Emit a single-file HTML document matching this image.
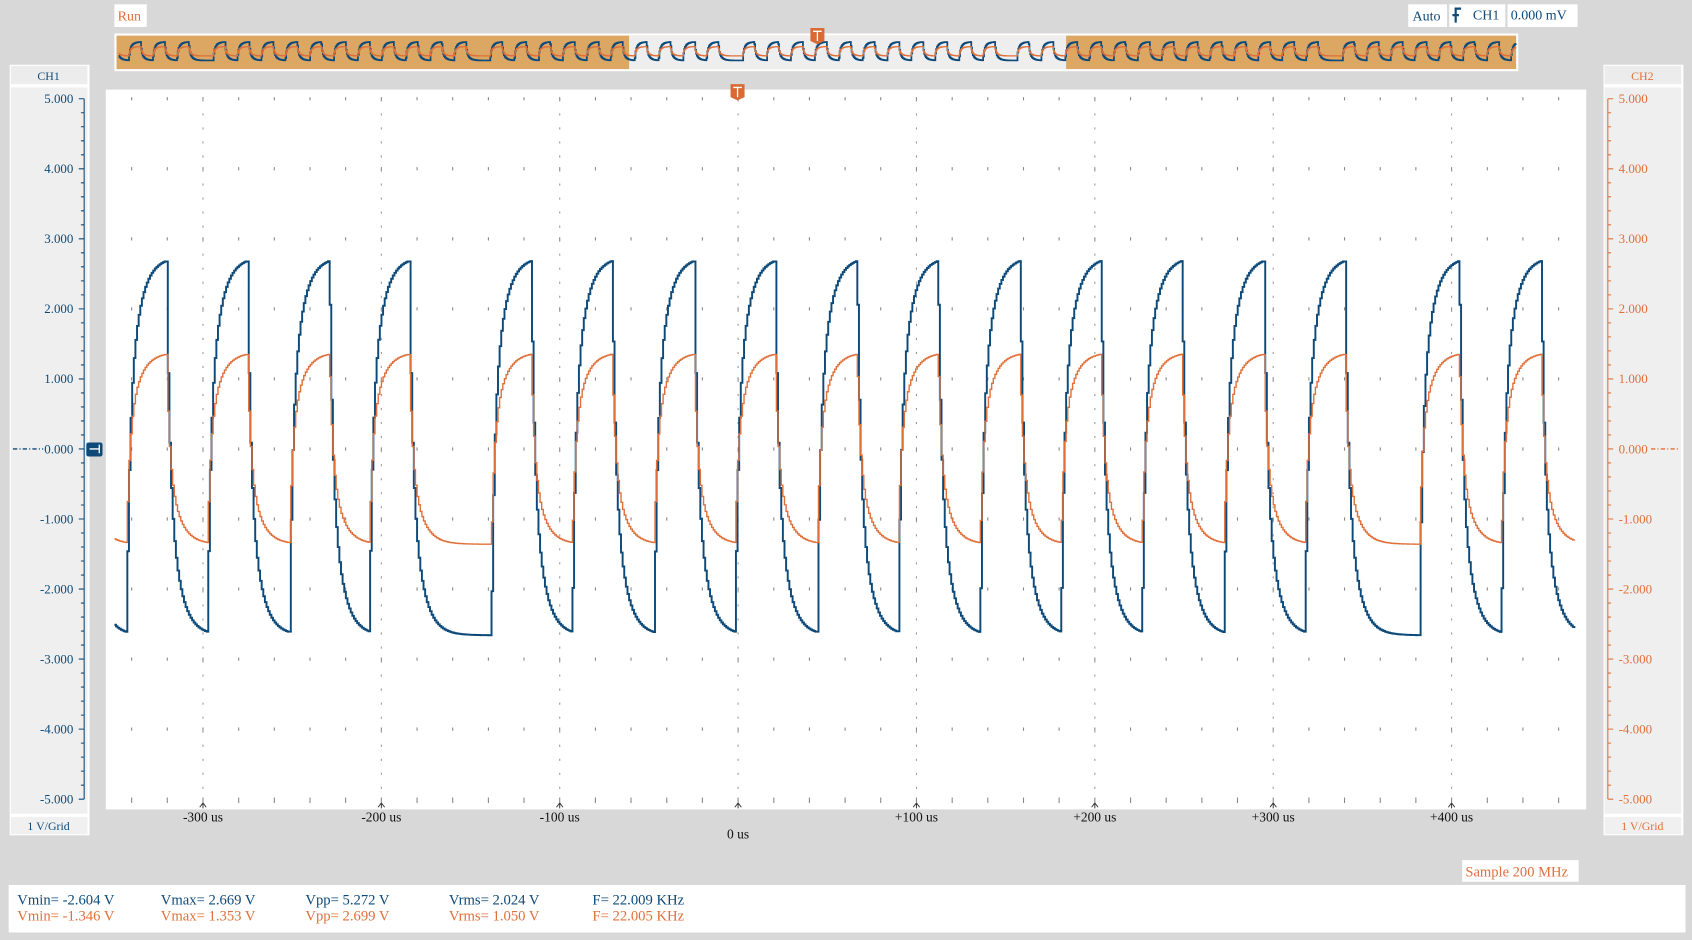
<!DOCTYPE html>
<html><head><meta charset="utf-8"><style>
html,body{margin:0;padding:0;background:#d8d8d8;width:1692px;height:940px;overflow:hidden}
svg{display:block}
text{font-family:"Liberation Serif",serif}
</style></head><body>
<svg id="s" width="1692" height="940" viewBox="0 0 1568 871" preserveAspectRatio="none" xmlns="http://www.w3.org/2000/svg">
<rect x="0" y="0" width="1568" height="871" fill="#d8d8d8"/>
<rect x="106" y="4" width="30" height="21" fill="#fff"/>
<text x="109" y="19" font-size="13" fill="#e0703a">Run</text>
<rect x="106" y="31" width="1301" height="35" fill="#fff"/>
<rect x="108" y="33" width="1297" height="31" fill="#dca663"/>
<rect x="583" y="33" width="405" height="31" fill="#eeeeee"/>
<g id="ov"></g>
<path d="M751 26h13v12l-6.5 3l-6.5-3z" fill="#d96a35"/>
<path d="M753.5 29h8M757.5 29v9" stroke="#fff" stroke-width="1.2"/>
<rect x="1305" y="4" width="36" height="21" fill="#fff"/>
<text x="1309" y="19" font-size="13" fill="#0d4a7a">Auto</text>
<rect x="1343" y="4" width="52" height="21" fill="#fff"/>
<path d="M1349 21v-13h5M1346 14h6" stroke="#0d4a7a" stroke-width="2" fill="none"/>
<text x="1365" y="18" font-size="13" fill="#0d4a7a">CH1</text>
<rect x="1397" y="4" width="65" height="21" fill="#fff"/>
<text x="1400" y="18" font-size="13" fill="#0d4a7a">0.000 mV</text>
<rect x="98" y="83" width="1372" height="667" fill="#fff"/>
<g id="grid"></g>
<path d="M677 78h13v12l-6.5 3l-6.5-3z" fill="#d96a35"/>
<path d="M679.5 81h8M683.5 81v9" stroke="#fff" stroke-width="1.2"/>
<rect x="9" y="60" width="74" height="714" fill="#fff"/>
<rect x="10" y="61" width="71" height="17" fill="#ececec"/>
<text x="45" y="74" font-size="11" fill="#0d4a7a" text-anchor="middle">CH1</text>
<rect x="10" y="81" width="71" height="673" fill="#efefef"/>
<rect x="10" y="757" width="71" height="16" fill="#f0f0f0"/>
<text x="45" y="769" font-size="11" fill="#0d4a7a" text-anchor="middle">1 V/Grid</text>
<rect x="1486" y="60" width="74" height="714" fill="#fff"/>
<rect x="1487" y="61" width="71" height="17" fill="#ececec"/>
<text x="1522" y="74" font-size="11" fill="#e0703a" text-anchor="middle">CH2</text>
<rect x="1487" y="81" width="71" height="673" fill="#efefef"/>
<rect x="1487" y="757" width="71" height="16" fill="#f0f0f0"/>
<text x="1522" y="769" font-size="11" fill="#e0703a" text-anchor="middle">1 V/Grid</text>
<g id="axes"></g>
<path d="M12 416h28" stroke="#0d4a7a" stroke-width="1.2" stroke-dasharray="4 2 1 2"/>
<path d="M1530 416h26" stroke="#e0703a" stroke-width="1.2" stroke-dasharray="4 2 1 2"/>
<rect x="80" y="410" width="15" height="13" rx="2" fill="#0d4a7a"/>
<path d="M83 416h9M92 412v8" stroke="#fff" stroke-width="1.2"/>
<g id="waves"></g>
<g font-size="12.5" fill="#111" text-anchor="middle" id="tl"></g>
<text x="684" y="777" font-size="12.5" fill="#111" text-anchor="middle">0 us</text>
<rect x="1355" y="797" width="108" height="20" fill="#fff"/>
<text x="1358" y="812" font-size="13.5" fill="#e0703a">Sample 200 MHz</text>
<rect x="8" y="820" width="1554" height="44" fill="#fff"/>
<g font-size="13.6" fill="#0d4a7a">
<text x="16" y="838">Vmin= -2.604 V</text><text x="149" y="838">Vmax= 2.669 V</text><text x="283" y="838">Vpp= 5.272 V</text><text x="416" y="838">Vrms= 2.024 V</text><text x="549" y="838">F= 22.009 KHz</text></g>
<g font-size="13.6" fill="#e0703a">
<text x="16" y="853">Vmin= -1.346 V</text><text x="149" y="853">Vmax= 1.353 V</text><text x="283" y="853">Vpp= 2.699 V</text><text x="416" y="853">Vrms= 1.050 V</text><text x="549" y="853">F= 22.005 KHz</text></g>
</svg>
<script>
var NS="http://www.w3.org/2000/svg";
function el(p,t,a){var e=document.createElementNS(NS,t);for(var k in a)e.setAttribute(k,a[k]);p.appendChild(e);return e;}
var g=document.getElementById('grid'),ax=document.getElementById('axes'),tl=document.getElementById('tl');
function Y(v){return 416-v*64.9;}
var d="";
for(var k=-18;k<=24;k++){var x=684+k*33.06;if(x<104||x>1466)continue;
 for(var v=-5;v<=5;v++){var y=Y(v);d+="M"+x.toFixed(1)+" "+(y-1.5)+"v3";}
 d+="M"+x.toFixed(1)+" 741v3";}
var d2="";
[-300,-200,-100,0,100,200,300,400].forEach(function(t){var x=684+t*1.653;
 for(var y=92;y<740;y+=13){d2+="M"+x.toFixed(1)+" "+y+"v2";}
 el(g,'path',{d:"M"+(x-3)+" 748l3-4l3 4M"+x+" 744v5",stroke:"#333","stroke-width":"0.9",fill:"none"});
 if(t!=0){var tx=el(tl,'text',{x:x,y:761});tx.textContent=(t>0?"+":"")+t+" us";}
});
el(g,'path',{d:d,stroke:"#888","stroke-width":"1"});
el(g,'path',{d:d2,stroke:"#999","stroke-width":"1"});
var a1="M78 91.5V740.5",a2="M1490 91.5V740.5";
for(var i=-25;i<=25;i++){var y=Y(i/5);var L=(i%5==0)?5:3;a1+="M"+(78-L)+" "+y+"h"+L;a2+="M1490 "+y+"h"+L;}
el(ax,'path',{d:a1,stroke:"#0d4a7a","stroke-width":"1",fill:"none"});
el(ax,'path',{d:a2,stroke:"#e0703a","stroke-width":"1",fill:"none"});
for(var v=-5;v<=5;v++){var s=v.toFixed(3);if(v==0)s="0.000";
 var t=el(ax,'text',{x:68,y:Y(v)+4,"font-size":"12",fill:"#0d4a7a","text-anchor":"end"});t.textContent=s;
 var t2=el(ax,'text',{x:1500,y:Y(v)+4,"font-size":"12",fill:"#e0703a"});t2.textContent=s;}
var rises=[117,192,268,342,455,530,606,681,757,832,908,983,1058,1134,1209,1315,1391];
var r=117,back=[];
while(r>-1560){r-=75.5;if(Math.abs(r+420)<40||Math.abs(r+1300)<40)r-=38;back.unshift(r);}
var fwd=[];r=1391;while(r<2950){r+=75.5;if(Math.abs(r-2300)<40)r+=38;fwd.push(r);}
var all=back.concat(rises).concat(fwd);
var edges=[];all.forEach(function(rr){edges.push([rr,1]);edges.push([rr+37,0]);});
function sim(x0,x1,step,H,Lw){var out=[],cur=Lw,ei=0,st=Lw,te=-1e9,tg=Lw;
 while(ei<edges.length&&edges[ei][0]<x0){ei++;}
 if(ei>0){te=edges[ei-1][0];tg=edges[ei-1][1]?H:Lw;st=tg==H?Lw:H;}
 for(var x=x0;x<=x1;x+=step){
  while(ei<edges.length&&edges[ei][0]<=x){st=cur;te=edges[ei][0];tg=edges[ei][1]?H:Lw;ei++;}
  var t=x-te;var f=1-0.5*Math.exp(-t/2.5)-0.5*Math.exp(-t/9.5);
  cur=st+(tg-st)*f;out.push([x,cur]);}
 return out;}
function wave(x0,x1,step,H,Lw,map){var p="",pts=sim(x0,x1,step,H,Lw);
 pts.forEach(function(q,i){var m=map(q[0],q[1]);if(i==0)p="M"+m[0].toFixed(1)+" "+m[1].toFixed(1);else p+="H"+m[0].toFixed(1)+"V"+m[1].toFixed(1);});
 return p;}
var w=document.getElementById('waves');
var mmap=function(x,v){return[x,Y(v)];};
el(w,'path',{d:wave(106,1460,1.5,2.74,-2.66,mmap),stroke:"#0d4a7a","stroke-width":"1.8",fill:"none"});
el(w,'path',{d:wave(106,1460,1.5,1.38,-1.36,mmap),stroke:"#e0703a","stroke-width":"1.3",fill:"none"});
var o=document.getElementById('ov');
var omap=function(x,v){return[583+(x-100)*405/1370,47.5-v*3.2];};
el(o,'path',{d:wave(-1500,2880,2.5,2.74,-2.66,omap),stroke:"#0d4a7a","stroke-width":"1.6",fill:"none"});
el(o,'path',{d:wave(-1500,2880,2.5,1.38,-1.36,omap),stroke:"#e0703a","stroke-width":"1.2",fill:"none"});
</script>
</body></html>
